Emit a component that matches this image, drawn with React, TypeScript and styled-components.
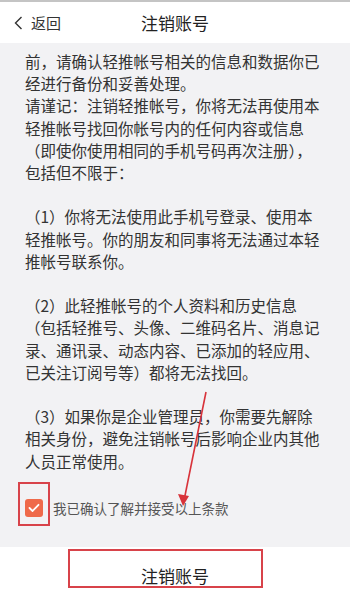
import React, { useState } from "react";
import styled, { createGlobalStyle } from "styled-components";

const GlobalStyle = createGlobalStyle`
  html, body {
    margin: 0;
    padding: 0;
    background: #fff;
  }
  body {
    font-family: "Noto Sans CJK SC", "Noto Sans", sans-serif;
  }
`;

const Page = styled.div`
  position: relative;
  width: 350px;
  height: 600px;
  display: flex;
  flex-direction: column;
  background: #fff;
  border-top: 2px solid #c4c4c4;
  box-sizing: border-box;
  overflow: hidden;
`;

const Header = styled.header`
  height: 41px;
  display: grid;
  grid-template-columns: 1fr auto 1fr;
  align-items: center;
  background: #fff;
`;

const BackButton = styled.button`
  justify-self: start;
  display: flex;
  align-items: center;
  gap: 8px;
  padding: 0 0 0 14px;
  border: none;
  background: none;
  font-family: inherit;
  font-size: 15px;
  color: #333;
  cursor: pointer;
`;

const Title = styled.h1`
  margin: 0;
  font-size: 17px;
  font-weight: 400;
  color: #222;
`;

const Content = styled.main`
  flex: 1;
  background: #f2f2f4;
  padding: 7px 25px 0;
  overflow: hidden;
`;

const Para = styled.p<{ $gap?: boolean }>`
  margin: ${(p) => (p.$gap ? "22.2px" : "0")} 0 0;
  width: 298px;
  font-size: 15.5px;
  line-height: 22.2px;
  color: #333;
`;

const AgreeRow = styled.label`
  display: flex;
  align-items: center;
  gap: 10px;
  margin-top: 26px;
  font-size: 13.5px;
  color: #555;
  cursor: pointer;
`;

const Check = styled.span<{ $on: boolean }>`
  width: 18px;
  height: 18px;
  border-radius: 3px;
  background: ${(p) => (p.$on ? "#ef6a4a" : "#fff")};
  border: ${(p) => (p.$on ? "none" : "1px solid #bbb")};
  display: flex;
  align-items: center;
  justify-content: center;
  flex-shrink: 0;
`;

const Footer = styled.footer`
  height: 53px;
  display: flex;
  align-items: center;
  justify-content: center;
  padding-top: 3px;
  box-sizing: border-box;
  background: #fff;
`;

const CancelButton = styled.button`
  border: none;
  background: none;
  font-family: inherit;
  font-size: 17px;
  color: #222;
  cursor: pointer;
`;

const Mark = styled.div`
  position: absolute;
  border: 2px solid #d8434a;
  box-sizing: border-box;
  pointer-events: none;
`;

const Arrow = styled.svg`
  position: absolute;
  left: 0;
  top: 0;
  pointer-events: none;
`;

export default function App() {
  const [agreed, setAgreed] = useState(true);

  return (
    <>
      <GlobalStyle />
      <Page>
        <Header>
          <BackButton>
            <svg width="9" height="14" viewBox="0 0 9 14">
              <path d="M7.5 1 L1.5 7 L7.5 13" fill="none" stroke="#333" strokeWidth="1.4" />
            </svg>
            返回
          </BackButton>
          <Title>注销账号</Title>
          <span />
        </Header>

        <Content>
          <Para>前，请确认轻推帐号相关的信息和数据你已经进行备份和妥善处理。</Para>
          <Para>
            请谨记：注销轻推帐号，你将无法再使用本轻推帐号找回你帐号内的任何内容或信息（即使你使用相同的手机号码再次注册），包括但不限于：
          </Para>
          <Para $gap>
            （1）你将无法使用此手机号登录、使用本轻推帐号。你的朋友和同事将无法通过本轻推帐号联系你。
          </Para>
          <Para $gap>
            （2）此轻推帐号的个人资料和历史信息（包括轻推号、头像、二维码名片、消息记录、通讯录、动态内容、已添加的轻应用、已关注订阅号等）都将无法找回。
          </Para>
          <Para $gap>
            （3）如果你是企业管理员，你需要先解除相关身份，避免注销帐号后影响企业内其他人员正常使用。
          </Para>

          <AgreeRow onClick={() => setAgreed((v) => !v)}>
            <Check $on={agreed}>
              {agreed && (
                <svg width="12" height="10" viewBox="0 0 12 10">
                  <path d="M1.5 5 L4.6 8 L10.5 1.8" fill="none" stroke="#fff" strokeWidth="1.8" strokeLinecap="round" strokeLinejoin="round" />
                </svg>
              )}
            </Check>
            我已确认了解并接受以上条款
          </AgreeRow>
        </Content>

        <Footer>
          <CancelButton>注销账号</CancelButton>
        </Footer>

        {/* annotations drawn over the screenshot */}
        <Mark style={{ left: 18, top: 480, width: 32, height: 44 }} />
        <Mark style={{ left: 68, top: 547, width: 195, height: 39 }} />
        <Arrow width="350" height="600">
          <line x1="206" y1="390" x2="184.5" y2="496" stroke="#d8333a" strokeWidth="1.6" />
          <polygon points="183,504 178,492 189,494" fill="#d8333a" />
        </Arrow>
      </Page>
    </>
  );
}
